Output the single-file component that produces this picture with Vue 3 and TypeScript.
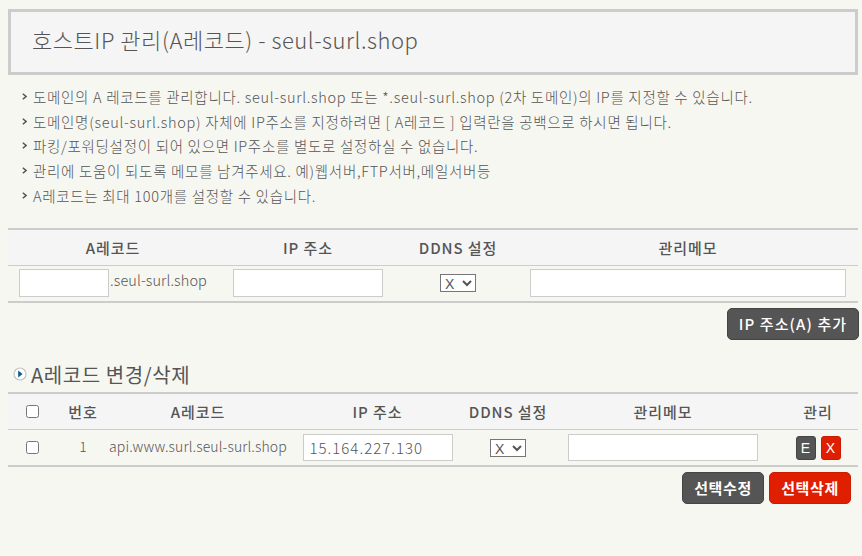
<script setup lang="ts">
const domain = 'seul-surl.shop'

const notes: string[] = [
  `도메인의 A 레코드를 관리합니다. ${domain} 또는 *.${domain} (2차 도메인)의 IP를 지정할 수 있습니다.`,
  `도메인명(${domain}) 자체에 IP주소를 지정하려면 [ A레코드 ] 입력란을 공백으로 하시면 됩니다.`,
  '파킹/포워딩설정이 되어 있으면 IP주소를 별도로 설정하실 수 없습니다.',
  '관리에 도움이 되도록 메모를 남겨주세요. 예)웹서버,FTP서버,메일서버등',
  'A레코드는 최대 100개를 설정할 수 있습니다.',
]

const records = [{ no: 1, host: `api.www.surl.${domain}`, ip: '15.164.227.130' }]
</script>

<template>
  <div class="page">
    <h1 class="title">호스트IP 관리(A레코드) - {{ domain }}</h1>

    <ul class="notes">
      <li v-for="note in notes" :key="note">
        <svg class="bullet" width="5" height="7" viewBox="0 0 5 7">
          <path d="M0.8 0.8 L4 3.5 L0.8 6.2" fill="none" stroke="#555" stroke-width="1.5" />
        </svg>
        <span>{{ note }}</span>
      </li>
    </ul>

    <table class="grid add-grid">
      <colgroup>
        <col style="width: 210px" />
        <col style="width: 180px" />
        <col style="width: 120px" />
        <col style="width: 340px" />
      </colgroup>
      <thead>
        <tr>
          <th>A레코드</th>
          <th>IP 주소</th>
          <th>DDNS 설정</th>
          <th>관리메모</th>
        </tr>
      </thead>
      <tbody>
        <tr>
          <td class="host-cell"><input class="field short" type="text" /><span class="suffix">.{{ domain }}</span></td>
          <td><input class="field ip" type="text" /></td>
          <td>
            <select class="ddns"><option>X</option><option>O</option></select>
          </td>
          <td><input class="field memo-wide" type="text" /></td>
        </tr>
      </tbody>
    </table>

    <div class="actions add-actions">
      <button class="btn dark wide" type="button">IP 주소(A) 추가</button>
    </div>

    <h2 class="section">
      <svg class="section-icon" width="14" height="14" viewBox="0 0 14 14">
        <circle cx="7" cy="7" r="6" fill="#fff" stroke="#c4c4c4" stroke-width="1.2" />
        <path d="M5.2 3.6 L9.6 7 L5.2 10.4 Z" fill="#0b5a96" />
      </svg>
      A레코드 변경/삭제
    </h2>

    <table class="grid edit-grid">
      <colgroup>
        <col style="width: 49px" />
        <col style="width: 52px" />
        <col style="width: 178px" />
        <col style="width: 181px" />
        <col style="width: 80px" />
        <col style="width: 230px" />
        <col style="width: 80px" />
      </colgroup>
      <thead>
        <tr>
          <th><input class="check" type="checkbox" /></th>
          <th>번호</th>
          <th>A레코드</th>
          <th>IP 주소</th>
          <th>DDNS 설정</th>
          <th>관리메모</th>
          <th>관리</th>
        </tr>
      </thead>
      <tbody>
        <tr v-for="rec in records" :key="rec.no">
          <td><input class="check" type="checkbox" /></td>
          <td>{{ rec.no }}</td>
          <td class="host-text">{{ rec.host }}</td>
          <td><input class="field ip" type="text" :value="rec.ip" /></td>
          <td>
            <select class="ddns"><option>X</option><option>O</option></select>
          </td>
          <td><input class="field memo" type="text" /></td>
          <td class="row-btns">
            <button class="mini dark" type="button">E</button>
            <button class="mini red" type="button">X</button>
          </td>
        </tr>
      </tbody>
    </table>

    <div class="actions bottom-actions">
      <button class="btn dark" type="button">선택수정</button>
      <button class="btn red" type="button">선택삭제</button>
    </div>
  </div>
</template>

<style>
body {
  background: #f7f7f2;
}
</style>

<style scoped>
.page {
  width: 850px;
  padding: 9px 4px 0 8px;
  color: #555;
  font-family: "Noto Sans CJK KR", "Liberation Sans", sans-serif;
  font-size: 14px;
}

.title {
  box-sizing: border-box;
  height: 66px;
  margin: 0;
  padding: 0 21px;
  border: 3px solid #ccc;
  background: #f5f5f5;
  font-size: 22px;
  font-weight: 300;
  line-height: 55px;
  letter-spacing: 0.55px;
}

.notes {
  margin: 9px 0 0;
  padding: 0 0 0 14px;
  list-style: none;
}

.notes li {
  display: flex;
  align-items: center;
  height: 24.75px;
  font-size: 14.5px;
  font-weight: 300;
  letter-spacing: 0.7px;
  white-space: nowrap;
}

.bullet {
  flex: none;
  margin-right: 6px;
}

.grid {
  width: 850px;
  table-layout: fixed;
  border-collapse: collapse;
  border-top: 2px solid #ccc;
  border-bottom: 2px solid #ccc;
}

.add-grid {
  margin-top: 20px;
}

.grid th {
  height: 35px;
  padding: 0;
  border-bottom: 1px solid #ccc;
  background: #f5f5f5;
  font-size: 15px;
  font-weight: 500;
  letter-spacing: 0.9px;
  text-align: center;
}

.grid td {
  height: 35px;
  padding: 0;
  font-weight: 300;
  line-height: 33px;
  text-align: center;
  vertical-align: top;
  white-space: nowrap;
}

.field {
  box-sizing: border-box;
  height: 28px;
  margin-top: 3px;
  padding: 0 6px;
  border: 1px solid #ccc;
  background: #fff;
  color: #555;
  font-family: inherit;
  font-size: 15px;
  font-weight: 300;
  letter-spacing: 1px;
  vertical-align: top;
}

.edit-grid .field {
  height: 27px;
  margin-top: 4px;
}

.short {
  width: 90px;
}

.ip {
  width: 150px;
}

.memo-wide {
  width: 316px;
}

.memo {
  width: 190px;
}

.suffix {
  margin-left: 1px;
}

.grid .host-cell {
  font-size: 14.5px;
  line-height: 28px;
  letter-spacing: 0.1px;
}

.host-text {
  font-size: 14px;
  letter-spacing: 0.15px;
}

.ddns {
  box-sizing: border-box;
  width: 36px;
  height: 18px;
  margin-top: 8px;
  padding: 0;
  background: #fff;
  color: #555;
  font-family: "Liberation Sans", sans-serif;
  font-size: 14px;
  vertical-align: top;
}

.edit-grid .ddns {
  margin-top: 9px;
}

.check {
  display: block;
  width: 13px;
  height: 13px;
  margin: 11px auto;
}

.actions {
  display: flex;
  justify-content: flex-end;
}

.add-actions {
  margin: 5px -1px 0 0;
}

.bottom-actions {
  gap: 5px;
  margin: 5px 7px 0 0;
}

.btn {
  box-sizing: border-box;
  width: 82px;
  height: 32px;
  padding: 0;
  border: 1px solid #444;
  border-radius: 5px;
  color: #fff;
  font-family: inherit;
  font-size: 15px;
  font-weight: 700;
  letter-spacing: 0.6px;
}

.wide {
  width: 132px;
  font-weight: 500;
  letter-spacing: 1.1px;
}

.dark {
  background: #555;
}

.red {
  border-color: #c91c00;
  background: #e01e00;
}

.section {
  display: flex;
  align-items: center;
  gap: 4px;
  height: 24px;
  margin: 23px 0 5px 5px;
  font-size: 20px;
  font-weight: 400;
  letter-spacing: 0.6px;
}

.section-icon {
  flex: none;
  margin-top: -2px;
}

.row-btns {
  font-size: 0;
}

.mini {
  box-sizing: border-box;
  width: 20px;
  height: 24px;
  margin-top: 6px;
  margin-right: 5px;
  padding: 0;
  border: 1px solid #444;
  border-radius: 3px;
  color: #fff;
  font-family: "Liberation Sans", sans-serif;
  font-size: 14px;
  vertical-align: top;
}

.mini.red {
  border-color: #c91c00;
}

.mini:last-child {
  margin-right: 0;
}
</style>
